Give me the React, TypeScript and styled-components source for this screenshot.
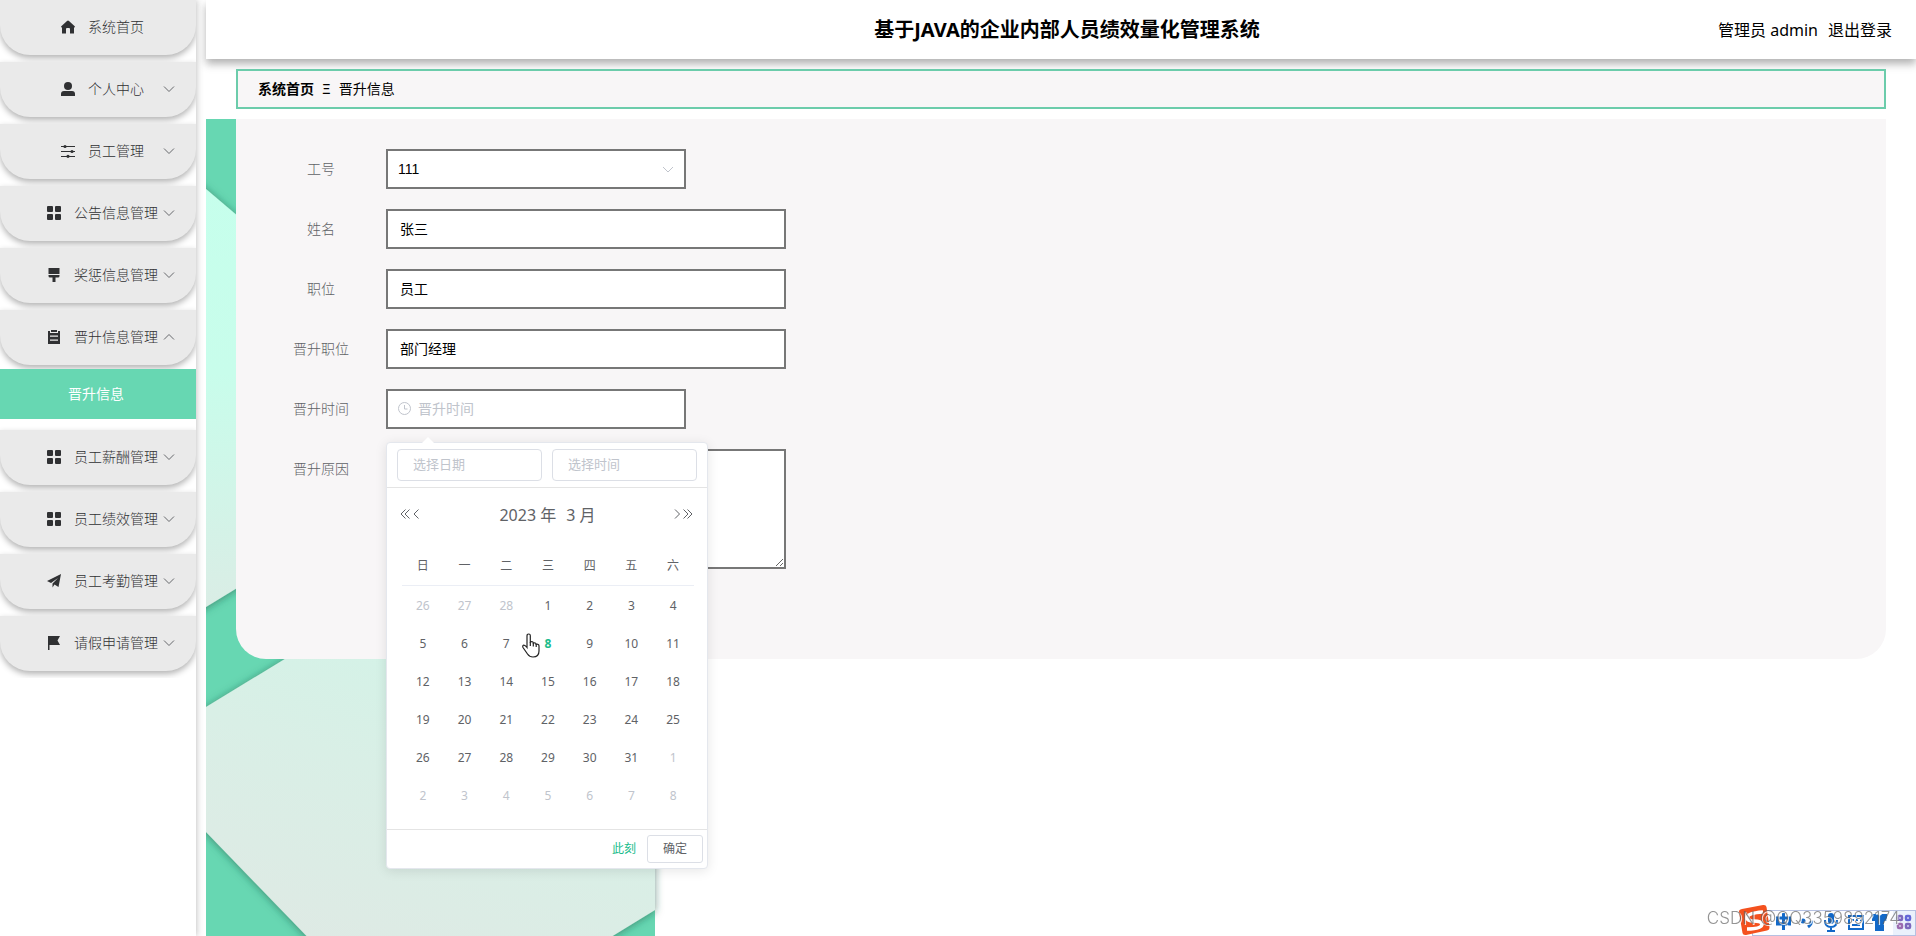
import React from "react";
import styled, { createGlobalStyle } from "styled-components";

const GlobalStyle = createGlobalStyle`
  *, *::before, *::after { box-sizing: border-box; }
  body { margin: 0; background: #fff; color: #000; font: 400 14px/20px "Noto Sans", "Noto Sans CJK SC", sans-serif; }
  button, input, select, textarea { font: inherit; }
`;

const Page = styled.div`
  display: flex;
  min-height: 100vh;
  overflow: hidden;
`;

/* ---------- sidebar ---------- */

const Sidebar = styled.nav`
  position: relative;
  z-index: 1;
  flex: 0 0 196px;
  margin-right: 10px;
  box-shadow: 1px 0 6px rgba(64, 64, 64, 0.3);
`;

const MenuList = styled.ul`
  list-style: none;
  margin: 0;
  padding: 0;
  overflow: hidden;
`;

const MenuEntry = styled.li`
  margin-bottom: 7px;
`;

const MenuButton = styled.button`
  display: grid;
  grid-template-columns: 1fr 12px;
  align-items: center;
  width: 100%;
  height: 55px;
  padding: 0 21px 2px 37px;
  border: 0;
  border-radius: 0 0 30px 30px;
  background: #eaeaea;
  box-shadow: 0 3px 6px rgba(0, 0, 0, 0.3);
  color: #303133;
  font-weight: 300;
  white-space: nowrap;
  cursor: pointer;
`;

const MenuLabel = styled.span`
  display: flex;
  align-items: center;
  justify-content: center;
  gap: 8px;
`;

const IconBox = styled.span`
  display: flex;
  justify-content: center;
  width: 24px;
`;

const SubMenu = styled.div`
  margin: 4px 0 11px;
`;

const SubLink = styled.a`
  display: block;
  padding-right: 4px;
  background: #67d7b2;
  color: #fff;
  line-height: 50px;
  text-align: center;
  text-decoration: none;
`;

/* ---------- main column ---------- */

const Main = styled.div`
  display: flex;
  flex: 1;
  flex-direction: column;
  min-width: 0;
`;

const Header = styled.header`
  display: grid;
  grid-template-columns: 1fr auto 1fr;
  align-items: center;
  height: 59px;
  padding: 0 24px;
  background: #fff;
  box-shadow: 0 5px 8px rgba(64, 64, 64, 0.4);
  font-size: 16px;
`;

const Title = styled.h1`
  grid-column: 2;
  margin: 0 0 0 12px;
  font-size: 20px;
  line-height: 28px;
  font-weight: 700;
`;

const Account = styled.div`
  display: flex;
  justify-content: flex-end;
  gap: 10px;
`;

const LogoutLink = styled.a`
  color: inherit;
  text-decoration: none;
`;

const Breadcrumb = styled.nav`
  display: flex;
  align-items: center;
  gap: 8px;
  height: 40px;
  margin: 10px 30px;
  padding: 0 20px;
  border: 2px solid #6cccab;
  background: #f8f6f7;
`;

const CrumbHome = styled.a`
  color: #000;
  font-weight: 700;
  text-decoration: none;
`;

const Body = styled.main`
  position: relative;
  flex: 1;
  padding: 0 30px;
`;

const Backdrop = styled.svg`
  position: absolute;
  top: 0;
  left: 0;
  width: 460px;
  height: 100%;
`;

const Panel = styled.form`
  position: relative;
  display: flex;
  flex-direction: column;
  gap: 20px;
  padding: 30px 30px 90px;
  border-radius: 0 0 30px 30px;
  background: #f8f6f7;
`;

const Field = styled.div`
  display: flex;
  align-items: flex-start;
`;

const FieldLabel = styled.label`
  flex: 0 0 120px;
  padding-right: 10px;
  color: #606266;
  font-weight: 300;
  line-height: 40px;
  text-align: center;
`;

const Control = styled.div<{ $narrow?: boolean }>`
  position: relative;
  display: flex;
  align-items: center;
  width: ${(p) => (p.$narrow ? 300 : 400)}px;
  height: 40px;
  padding: 0 ${(p) => (p.$narrow ? 10 : 12)}px;
  gap: 6px;
  border: 2px solid #777;
  background: #fff;
  color: #c0c4cc;
`;

const TextInput = styled.input`
  flex: 1;
  min-width: 0;
  padding: 0;
  border: 0;
  outline: 0;
  background: none;
  color: #000;
  &::placeholder { color: #c0c4cc; opacity: 1; }
`;

const Select = styled.select`
  flex: 1;
  padding: 0;
  border: 0;
  appearance: none;
  background: none;
  color: #000;
  font-family: "Liberation Sans", sans-serif;
`;

const TextArea = styled.textarea`
  display: block;
  width: 400px;
  height: 120px;
  padding: 8px 12px;
  border: 2px solid #777;
  background: #fff;
  resize: vertical;
`;

/* ---------- date picker ---------- */

const Picker = styled.div`
  position: absolute;
  top: 51px;
  left: -2px;
  z-index: 2;
  width: 322px;
  border: 1px solid #e4e7ed;
  border-radius: 4px;
  background: #fff;
  box-shadow: 0 2px 12px rgba(0, 0, 0, 0.1);
  color: #606266;
  &::before {
    content: "";
    position: absolute;
    top: -6px;
    left: 35px;
    border: 6px solid transparent;
    border-top: 0;
    border-bottom-color: #fff;
  }
`;

const PickerInputs = styled.div`
  display: grid;
  grid-template-columns: 1fr 1fr;
  gap: 10px;
  padding: 6px 10px;
  border-bottom: 1px solid #e4e4e4;
`;

const PickerInput = styled.input`
  min-width: 0;
  height: 32px;
  padding: 0 15px 2px;
  border: 1px solid #dcdfe6;
  border-radius: 4px;
  font-size: 13px;
  &::placeholder { color: #c0c4cc; opacity: 1; }
`;

const MonthBar = styled.div`
  display: grid;
  grid-template-columns: 22px 1fr 22px;
  align-items: center;
  margin: 12px 12px 0 13px;
  height: 30px;
`;

const MonthTitle = styled.div`
  display: flex;
  justify-content: center;
  gap: 10px;
  font-size: 16px;
`;

const ArrowGroup = styled.div`
  display: flex;
  gap: 2px;
`;

const ArrowButton = styled.button`
  display: flex;
  padding: 0 0 2px;
  border: 0;
  background: none;
  color: #606266;
`;

const Calendar = styled.table`
  width: 292px;
  margin: 16px 15px 15px;
  border-collapse: separate;
  border-spacing: 0;
  table-layout: fixed;
  font-size: 12px;
`;

const WeekDay = styled.th`
  height: 40px;
  padding: 0;
  border-bottom: 1px solid #ebeef5;
  font-weight: 400;
`;

const Day = styled.td<{ $muted?: boolean; $today?: boolean }>`
  height: 38px;
  padding: 1px 0 0;
  color: ${(p) => (p.$today ? "#1abc8b" : p.$muted ? "#c0c4cc" : "#606266")};
  font-weight: ${(p) => (p.$today ? 700 : 400)};
  text-align: center;
`;

const PickerFooter = styled.div`
  display: flex;
  justify-content: flex-end;
  align-items: center;
  gap: 11px;
  height: 39px;
  padding: 0 4px;
  border-top: 1px solid #e4e4e4;
  font-size: 12px;
`;

const NowButton = styled.button`
  padding: 0;
  border: 0;
  background: none;
  color: #1abc8b;
`;

const ConfirmButton = styled.button`
  width: 56px;
  height: 28px;
  padding: 0;
  border: 1px solid #dcdfe6;
  border-radius: 3px;
  background: #fff;
  color: #606266;
`;

const Pointer = styled.svg`
  position: absolute;
  top: 190px;
  left: 134px;
`;

/* ---------- desktop overlays ---------- */

const ImeBar = styled.div`
  position: fixed;
  right: 0;
  bottom: 0;
  z-index: 3;
  display: flex;
  width: 178px;
  height: 32px;
`;

const Watermark = styled.div`
  position: fixed;
  right: 16px;
  bottom: 8px;
  z-index: 4;
  color: rgba(90, 90, 90, 0.65);
  font: 400 17px/20px Inter, "Liberation Sans", sans-serif;
  font-weight: 300;
  text-shadow: 1px 1px 0 rgba(255, 255, 255, 0.8);
`;

/* ---------- icons ---------- */

type IconName = "home" | "user" | "sliders" | "grid" | "brush" | "clipboard" | "plane" | "flag";

const iconShapes: Record<IconName, React.ReactNode> = {
  home: <path d="M7 0.500Q7.500 0.500 8 1L14 6.500 13 8V13.500H9V9Q9 8 8 8H6Q5 8 5 9V13.500H1V8L0 6.500 6 1Q6.500 0.500 7 0.500Z" />,
  user: (
    <>
      <circle cx="7" cy="4" r="4" />
      <path d="M0 14v-2q0-3 3-3h8q3 0 3 3v2z" />
    </>
  ),
  sliders: (
    <>
      <path d="M0 2.500h14M0 7.500h14M0 12.500h14" stroke="currentColor" fill="none" />
      <circle cx="4" cy="2.500" r="1.600" />
      <circle cx="11" cy="7.500" r="1.600" />
      <circle cx="7" cy="12.300" r="1.600" />
    </>
  ),
  grid: (
    <>
      <rect width="6" height="6" rx="1" />
      <rect x="8" width="6" height="6" rx="1" />
      <rect y="8" width="6" height="6" rx="1" />
      <rect x="8" y="8" width="6" height="6" rx="1" />
    </>
  ),
  brush: <path d="M1.500 0h11v6h-11zM1.500 7h11v1q0 1.500-1.500 1.500H8.500V14h-3V9.500H3Q1.500 9.500 1.500 8z" />,
  clipboard: (
    <>
      <path d="M4 0h6v2H4z" />
      <path d="M1 1h2v2h8V1h2v13H1zM3 5.500v1.200h8V5.500zM3 9.500v1.200h8V9.500z" fillRule="evenodd" />
    </>
  ),
  plane: <path d="M14 0 11.500 13 7.500 10.500 5.500 13.500V9.500L11 4 4 9 0 7Z" />,
  flag: <path d="M1 0h12l-2.500 4.500L13 9H2.500v5H1z" />,
};

const MenuIcon = ({ name }: { name: IconName }) => (
  <svg width="14" height="14" viewBox="0 0 14 14" fill="currentColor" aria-hidden="true">
    {iconShapes[name]}
  </svg>
);

const Chevron = ({ up = false }: { up?: boolean }) => (
  <svg width="12" height="12" viewBox="0 0 12 12" fill="none" stroke="#66686c" aria-hidden="true">
    <path d={up ? "M1 8.500 6 3.500 11 8.500" : "M1 3.500 6 8.500 11 3.500"} />
  </svg>
);

const StepArrow = ({ d, width }: { d: string; width: number }) => (
  <svg width={width} height="12" viewBox={`0 0 ${width} 12`} fill="none" stroke="currentColor" aria-hidden="true">
    <path d={d} />
  </svg>
);

/* ---------- data ---------- */

interface MenuItem {
  icon: IconName;
  text: string;
  leaf?: boolean;
  child?: string;
}

const menu: MenuItem[] = [
  { icon: "home", text: "系统首页", leaf: true },
  { icon: "user", text: "个人中心" },
  { icon: "sliders", text: "员工管理" },
  { icon: "grid", text: "公告信息管理" },
  { icon: "brush", text: "奖惩信息管理" },
  { icon: "clipboard", text: "晋升信息管理", child: "晋升信息" },
  { icon: "grid", text: "员工薪酬管理" },
  { icon: "grid", text: "员工绩效管理" },
  { icon: "plane", text: "员工考勤管理" },
  { icon: "flag", text: "请假申请管理" },
];

const weekDays = ["日", "一", "二", "三", "四", "五", "六"];

/* March 2023 starts on a Wednesday, so the grid opens with 26 February. */
const weeks = Array.from({ length: 6 }, (_, w) =>
  Array.from({ length: 7 }, (_, d) => {
    const date = new Date(2023, 1, 26 + w * 7 + d);
    return { day: date.getDate(), muted: date.getMonth() !== 2 };
  })
);

const DatePicker = () => (
  <Picker>
    <PickerInputs>
      <PickerInput aria-label="选择日期" placeholder="选择日期" />
      <PickerInput aria-label="选择时间" placeholder="选择时间" />
    </PickerInputs>
    <MonthBar>
      <ArrowGroup>
        <ArrowButton type="button" aria-label="前一年">
          <StepArrow width={10} d="M5.500 1.500 1 6 5.500 10.500M9.500 1.500 5 6 9.500 10.500" />
        </ArrowButton>
        <ArrowButton type="button" aria-label="上个月">
          <StepArrow width={8} d="M6.500 1.500 2 6 6.500 10.500" />
        </ArrowButton>
      </ArrowGroup>
      <MonthTitle>
        <span>2023 年</span>
        <span>3 月</span>
      </MonthTitle>
      <ArrowGroup>
        <ArrowButton type="button" aria-label="下个月">
          <StepArrow width={8} d="M2 1.500 6.500 6 2 10.500" />
        </ArrowButton>
        <ArrowButton type="button" aria-label="后一年">
          <StepArrow width={10} d="M.500 1.500 5 6 .500 10.500M4.500 1.500 9 6 4.500 10.500" />
        </ArrowButton>
      </ArrowGroup>
    </MonthBar>
    <Calendar>
      <thead>
        <tr>
          {weekDays.map((d) => (
            <WeekDay key={d} scope="col">{d}</WeekDay>
          ))}
        </tr>
      </thead>
      <tbody>
        {weeks.map((week, i) => (
          <tr key={i}>
            {week.map(({ day, muted }) => (
              <Day key={day} $muted={muted} $today={day === 8 && !muted}>{day}</Day>
            ))}
          </tr>
        ))}
      </tbody>
    </Calendar>
    <PickerFooter>
      <NowButton type="button">此刻</NowButton>
      <ConfirmButton type="button">确定</ConfirmButton>
    </PickerFooter>
    <Pointer width="20" height="26" viewBox="0 0 20 26" aria-hidden="true">
      <path
        d="M6 14V3q0-2 1.700-2T9.300 3v6q2.700-1 3 1 2.500-.700 2.800 1.200Q18 10.700 18 13v5q0 6-6 6-3.500 0-5.500-3L2 14.500q-.800-2 .700-2.300Q4 12 6 14.500Z"
        fill="#fff"
        stroke="#222"
        strokeWidth="1.200"
      />
      <path d="M9.300 9v4M12.300 10v3.500M15.200 11v3" stroke="#222" strokeWidth="1.200" />
    </Pointer>
  </Picker>
);

const PageBackdrop = () => (
  <Backdrop aria-hidden="true">
    <defs>
      <linearGradient id="upper" x1="0" y1="0" x2="0" y2="1">
        <stop offset="0" stopColor="#c6ffec" />
        <stop offset="0.450" stopColor="#c8fdeb" />
        <stop offset="1" stopColor="#dbece5" />
      </linearGradient>
      <linearGradient id="lower" x1="0.700" y1="0" x2="0.300" y2="1">
        <stop offset="0" stopColor="#d0f5e8" />
        <stop offset="0.500" stopColor="#d9efe6" />
        <stop offset="1" stopColor="#dfe9e4" />
      </linearGradient>
      <filter id="soft" x="-20%" y="-20%" width="140%" height="140%">
        <feDropShadow dx="0" dy="1" stdDeviation="4" floodColor="#1f5c48" floodOpacity="0.600" />
      </filter>
    </defs>
    <rect width="449" height="100%" fill="#67d7b2" />
    <path d="M-20 53 0 70 200 240 200 366 0 488-20 500Z" fill="url(#upper)" filter="url(#soft)" />
    <path d="M-20 600 0 588 200 466 449 466V791L330 864 146 864 0 713-20 692Z" fill="url(#lower)" filter="url(#soft)" />
  </Backdrop>
);

const ImeIcons = () => (
  <ImeBar aria-hidden="true">
    <svg width="178" height="32" viewBox="0 0 178 32">
      <rect x="14.500" y="6.500" width="163" height="25" fill="#fdfdff" stroke="#b5c0e2" />
      <rect x="155" y="7" width="22" height="24" fill="#eaf1fc" />
      <path d="M4 5 25 1q3-.500 3.500 2l3 20q.200 3-2.500 3.500L8 31q-3 .500-3.500-2L1 8q-.300-2.500 3-3Z" fill="#f4511e" />
      <path d="M25 8Q9 9 9 14q0 3 7 3t8 3q0 5-15 5" fill="none" stroke="#fff" strokeWidth="3.500" />
      <g fill="none" stroke="#1268c8" strokeWidth="3">
        <path d="M39.500 14h12v6h-12zM45.500 9v17" />
        <path d="M73 17q1 3-3 6" />
        <path d="M87 16q0 7 6 7t6-7M93 23v4M89 27h8" strokeWidth="2" />
        <path d="M111 12h14v13h-14zM114 16h2m2 0h2m2 0h1M114 21h8" strokeWidth="2" />
      </g>
      <circle cx="65" cy="17" r="2.500" fill="#1268c8" />
      <rect x="90" y="9" width="6" height="11" rx="3" fill="#1268c8" />
      <path d="M134 10h5q3 3 5 0h5v7h-3v10h-9V17h-3z" fill="#1268c8" />
      <g fill="none" strokeWidth="2.500">
        <rect x="160" y="12" width="4" height="4" rx="1" stroke="#7d68bd" />
        <rect x="168" y="12" width="4" height="4" rx="1" stroke="#6366d8" />
        <rect x="160" y="20" width="4" height="4" rx="1" stroke="#9b6bb0" />
        <rect x="168" y="20" width="4" height="4" rx="1" stroke="#7d68bd" />
      </g>
    </svg>
  </ImeBar>
);

export default function App() {
  return (
    <Page>
      <GlobalStyle />
      <Sidebar aria-label="主菜单">
        <MenuList>
          {menu.map((item) => (
            <MenuEntry key={item.text}>
              <MenuButton type="button" aria-expanded={item.leaf ? undefined : !!item.child}>
                <MenuLabel>
                  <IconBox>
                    <MenuIcon name={item.icon} />
                  </IconBox>
                  {item.text}
                </MenuLabel>
                {!item.leaf && <Chevron up={!!item.child} />}
              </MenuButton>
              {item.child && (
                <SubMenu>
                  <SubLink href="#promotion">{item.child}</SubLink>
                </SubMenu>
              )}
            </MenuEntry>
          ))}
        </MenuList>
      </Sidebar>
      <Main>
        <Header>
          <Title>基于JAVA的企业内部人员绩效量化管理系统</Title>
          <Account>
            <span>管理员 admin</span>
            <LogoutLink href="#logout">退出登录</LogoutLink>
          </Account>
        </Header>
        <Breadcrumb aria-label="位置">
          <CrumbHome href="#home">系统首页</CrumbHome>
          <span>Ξ</span>
          <span>晋升信息</span>
        </Breadcrumb>
        <Body>
          <PageBackdrop />
          <Panel>
            <Field>
              <FieldLabel htmlFor="staff-no">工号</FieldLabel>
              <Control $narrow>
                <Select id="staff-no" defaultValue="111">
                  <option value="111">111</option>
                </Select>
                <svg width="12" height="12" viewBox="0 0 12 12" fill="none" stroke="currentColor" aria-hidden="true">
                  <path d="M1 4 6 9 11 4" />
                </svg>
              </Control>
            </Field>
            <Field>
              <FieldLabel htmlFor="name">姓名</FieldLabel>
              <Control>
                <TextInput id="name" defaultValue="张三" />
              </Control>
            </Field>
            <Field>
              <FieldLabel htmlFor="post">职位</FieldLabel>
              <Control>
                <TextInput id="post" defaultValue="员工" />
              </Control>
            </Field>
            <Field>
              <FieldLabel htmlFor="new-post">晋升职位</FieldLabel>
              <Control>
                <TextInput id="new-post" defaultValue="部门经理" />
              </Control>
            </Field>
            <Field>
              <FieldLabel htmlFor="promoted-at">晋升时间</FieldLabel>
              <Control $narrow>
                <svg width="14" height="14" viewBox="0 0 14 14" fill="none" stroke="currentColor" aria-hidden="true">
                  <circle cx="6.500" cy="6.500" r="6" />
                  <path d="M6.500 3V7H9.500" />
                </svg>
                <TextInput id="promoted-at" placeholder="晋升时间" />
                <DatePicker />
              </Control>
            </Field>
            <Field>
              <FieldLabel htmlFor="reason">晋升原因</FieldLabel>
              <TextArea id="reason" />
            </Field>
          </Panel>
        </Body>
      </Main>
      <ImeIcons />
      <Watermark>CSDN @QQ3359892174</Watermark>
    </Page>
  );
}
